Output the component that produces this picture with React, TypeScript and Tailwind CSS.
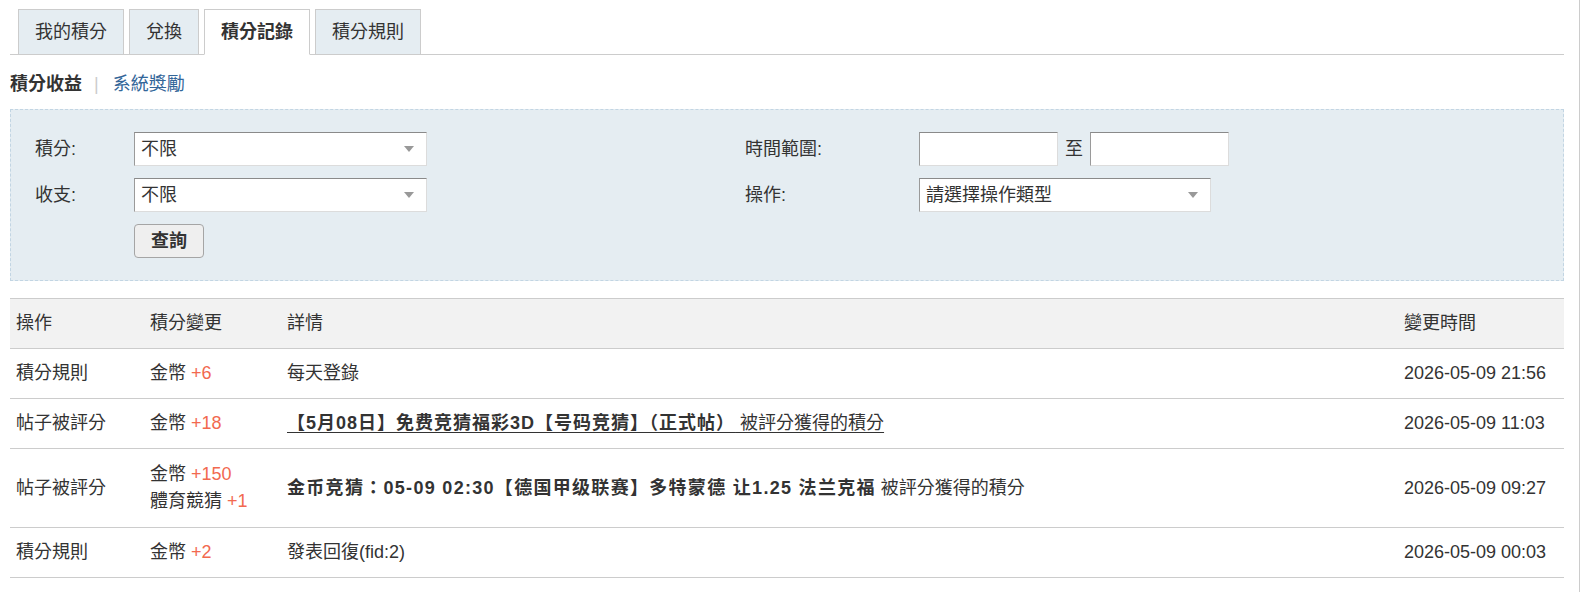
import React from 'react';

type Change = { label: string; value: string };

interface LogRow {
  op: string;
  changes: Change[];
  detail: React.ReactNode;
  time: string;
  tall?: boolean;
}

const tabs = [
  { key: 'mine', label: '我的積分' },
  { key: 'exchange', label: '兌換' },
  { key: 'log', label: '積分記錄', active: true },
  { key: 'rule', label: '積分規則' },
];

const rows: LogRow[] = [
  {
    op: '積分規則',
    changes: [{ label: '金幣', value: '+6' }],
    detail: '每天登錄',
    time: '2026-05-09 21:56',
  },
  {
    op: '帖子被評分',
    changes: [{ label: '金幣', value: '+18' }],
    detail: (
      <a href="#" className="underline underline-offset-[3px]">
        <b className="tracking-[1px]">【5月08日】免费竞猜福彩3D【号码竞猜】（正式帖）</b> 被評分獲得的積分
      </a>
    ),
    time: '2026-05-09 11:03',
  },
  {
    op: '帖子被評分',
    changes: [
      { label: '金幣', value: '+150' },
      { label: '體育競猜', value: '+1' },
    ],
    detail: (
      <>
        <b className="tracking-[1.3px]">金币竞猜：05-09 02:30【德国甲级联赛】多特蒙德 让1.25 法兰克福</b> 被評分獲得的積分
      </>
    ),
    time: '2026-05-09 09:27',
    tall: true,
  },
  {
    op: '積分規則',
    changes: [{ label: '金幣', value: '+2' }],
    detail: '發表回復(fid:2)',
    time: '2026-05-09 00:03',
  },
];

const Select = ({ value, width }: { value: string; width: string }) => (
  <div
    className={`${width} h-[34px] bg-white border border-t-[#8a8a8a] border-l-[#9a9a9a] border-r-[#dcdcdc] border-b-[#dcdcdc] flex items-center justify-between pl-[6px] pr-[12px]`}
  >
    <span>{value}</span>
    <span className="w-0 h-0 border-l-[5px] border-r-[5px] border-t-[6px] border-l-transparent border-r-transparent border-t-[#999]" />
  </div>
);

const TextInput = () => (
  <div className="w-[139px] h-[34px] bg-white border border-t-[#8a8a8a] border-l-[#9a9a9a] border-r-[#dcdcdc] border-b-[#dcdcdc]" />
);

export default function App() {
  return (
    <div
      className="w-[1580px] min-h-[592px] bg-white border-r border-[#cccccc] text-[18px] text-[#333] pl-[10px] pr-[15px]"
      style={{ fontFamily: '"Liberation Sans", "Noto Sans CJK TC", sans-serif' }}
    >
      {/* tab bar */}
      <div className="pt-[9px] pl-[8px] flex gap-[5px] border-b border-[#cccccc] h-[55px]">
        {tabs.map((t) => (
          <div
            key={t.key}
            className={`h-[46px] px-[16px] flex items-center border border-[#cccccc] ${
              t.active ? 'bg-white font-bold border-b-white' : 'bg-[#e5edf2]'
            }`}
          >
            {t.label}
          </div>
        ))}
      </div>

      {/* sub navigation */}
      <div className="h-[54px] pt-[5px] flex items-center">
        <span className="font-bold">積分收益</span>
        <span className="text-[#cccccc] ml-[12px] mr-[14px]">|</span>
        <a href="#" className="text-[#336699]">系統獎勵</a>
      </div>

      {/* filter form */}
      <div className="border border-dashed border-[#c2d5e3] bg-[#e5edf2] pl-[24px] pt-[22px] pb-[22px]">
        <div className="grid grid-cols-[99px_611px_174px_1fr] auto-rows-[34px] gap-y-[12px] items-center">
          <span>積分:</span>
          <Select value="不限" width="w-[293px]" />
          <span>時間範圍:</span>
          <div className="flex items-center">
            <TextInput />
            <span className="mx-[7px]">至</span>
            <TextInput />
          </div>

          <span>收支:</span>
          <Select value="不限" width="w-[293px]" />
          <span>操作:</span>
          <Select value="請選擇操作類型" width="w-[292px]" />

          <span />
          <div>
            <button className="h-[34px] w-[70px] rounded-[4px] border border-[#a5a5a5] bg-[#efefef] font-bold">
              查詢
            </button>
          </div>
        </div>
      </div>

      {/* log table */}
      <table className="w-full mt-[17px] border-collapse">
        <colgroup>
          <col className="w-[133px]" />
          <col className="w-[137px]" />
          <col />
          <col className="w-[167px]" />
        </colgroup>
        <thead>
          <tr className="bg-[#f2f2f2] border-y border-[#cccccc] h-[50px] text-left">
            <th className="font-normal pl-[6px]">操作</th>
            <th className="font-normal pl-[7px]">積分變更</th>
            <th className="font-normal pl-[7px]">詳情</th>
            <th className="font-normal pl-[7px]">變更時間</th>
          </tr>
        </thead>
        <tbody>
          {rows.map((r, i) => (
            <tr key={i} className={`border-b border-[#cccccc] ${r.tall ? 'h-[79px]' : 'h-[50px]'}`}>
              <td className="pl-[6px] align-middle">{r.op}</td>
              <td className="pl-[7px] align-middle leading-[27px]">
                {r.changes.map((c) => (
                  <div key={c.label}>
                    {c.label} <span className="text-[#f2694f]">{c.value}</span>
                  </div>
                ))}
              </td>
              <td className="pl-[7px] align-middle">{r.detail}</td>
              <td className="pl-[7px] align-middle whitespace-nowrap">{r.time}</td>
            </tr>
          ))}
        </tbody>
      </table>
    </div>
  );
}
